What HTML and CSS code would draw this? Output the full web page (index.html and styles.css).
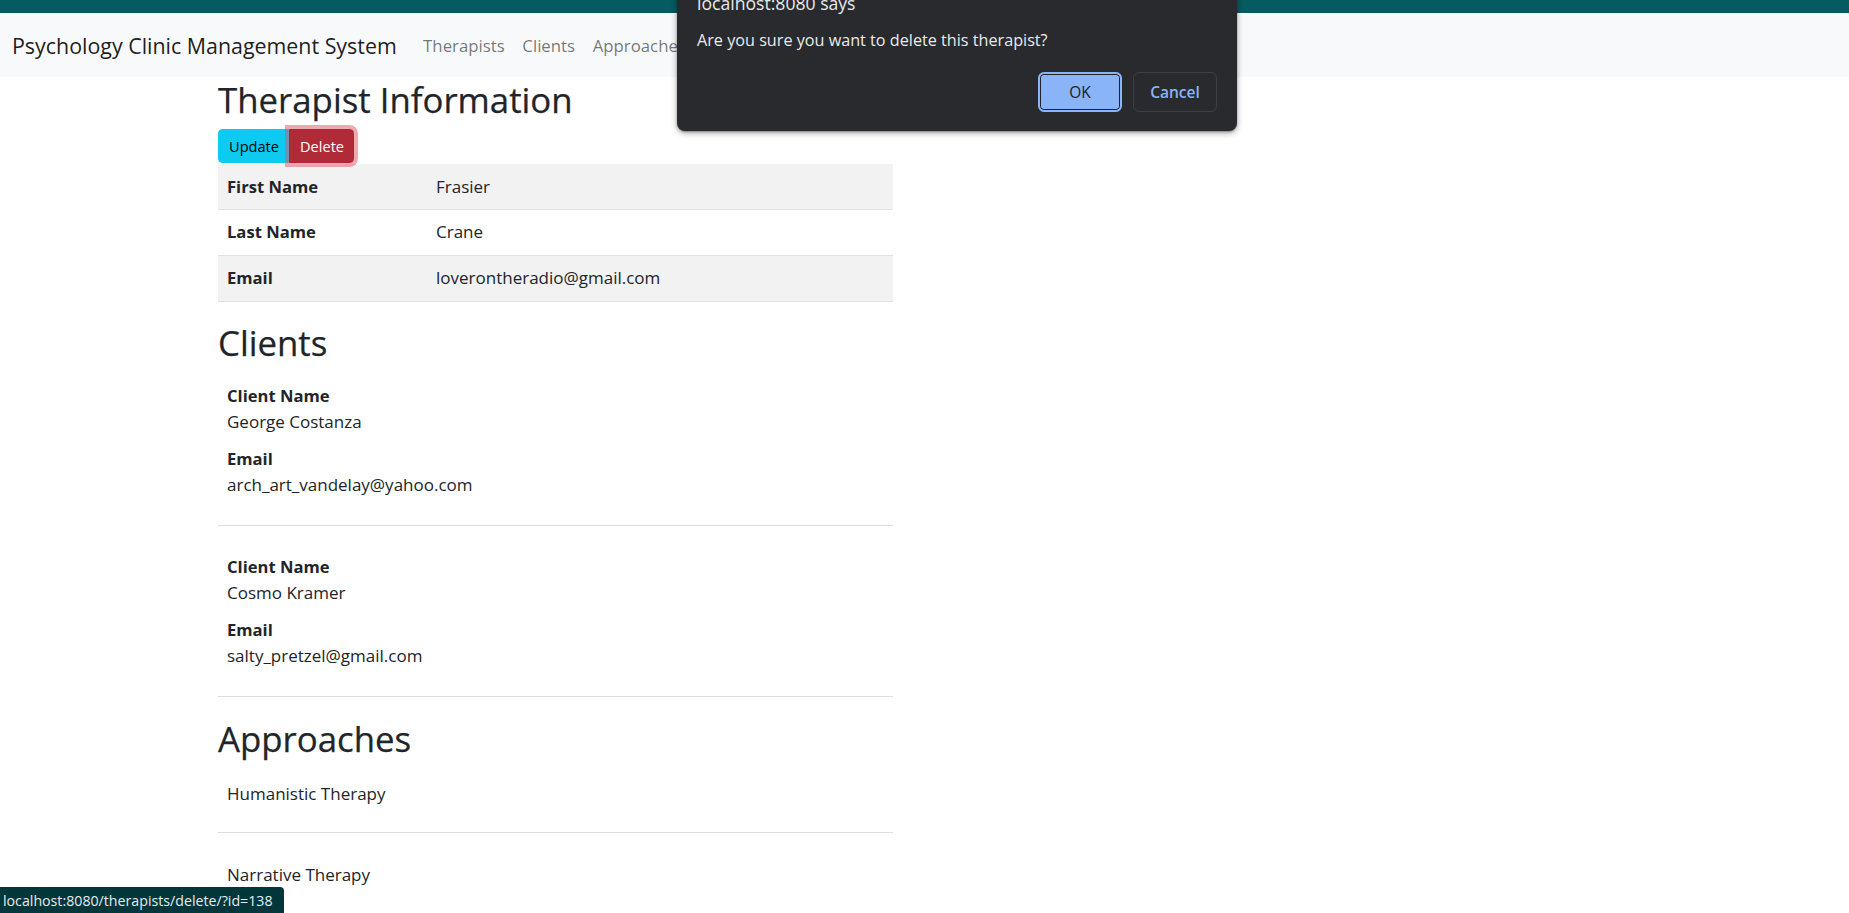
FILE: index.html
```html
<!DOCTYPE html>
<html lang="en">
<head>
<meta charset="utf-8">
<title>Therapist Information</title>
<link rel="stylesheet" href="styles.css">
</head>
<body>
<div class="topbar"></div>
<nav class="navbar">
  <a class="brand" href="#">Psychology Clinic Management System</a>
  <ul class="nav">
    <li><a class="nav-link" href="#">Therapists</a></li>
    <li><a class="nav-link" href="#">Clients</a></li>
    <li><a class="nav-link" href="#">Approaches</a></li>
  </ul>
</nav>

<main class="main">
  <h1 class="heading heading-main">Therapist Information</h1>
  <div class="btn-group">
    <button class="btn btn-info">Update</button>
    <button class="btn btn-danger">Delete</button>
  </div>
  <table class="info-table">
    <tbody>
      <tr class="striped"><th>First Name</th><td>Frasier</td></tr>
      <tr><th>Last Name</th><td>Crane</td></tr>
      <tr class="striped"><th>Email</th><td>loverontheradio@gmail.com</td></tr>
    </tbody>
  </table>

  <h2 class="heading heading-section">Clients</h2>
  <div class="item">
    <dl class="fields">
      <dt>Client Name</dt><dd>George Costanza</dd>
      <dt>Email</dt><dd>arch_art_vandelay@yahoo.com</dd>
    </dl>
  </div>
  <hr class="divider">
  <div class="item">
    <dl class="fields">
      <dt>Client Name</dt><dd>Cosmo Kramer</dd>
      <dt>Email</dt><dd>salty_pretzel@gmail.com</dd>
    </dl>
  </div>
  <hr class="divider">

  <h2 class="heading heading-section">Approaches</h2>
  <div class="item approach"><p class="line">Humanistic Therapy</p></div>
  <hr class="divider">
  <div class="item approach"><p class="line">Narrative Therapy</p></div>
</main>

<div class="dialog" role="dialog">
  <div class="dialog-title">localhost:8080 says</div>
  <div class="dialog-msg">Are you sure you want to delete this therapist?</div>
  <div class="dialog-actions">
    <button class="dbtn dbtn-ok">OK</button>
    <button class="dbtn dbtn-cancel">Cancel</button>
  </div>
</div>

<div class="statusbar">localhost:8080/therapists/delete/?id=138</div>
</body>
</html>
```

FILE: styles.css
```css
* { box-sizing: border-box; }

html, body {
  margin: 0;
  padding: 0;
  background: #ffffff;
  overflow: hidden;
}

body {
  font-family: "Open Sans", "Noto Sans", "Liberation Sans", sans-serif;
  font-size: 17px;
  line-height: 26.4px;
  color: #212529;
  height: 913px;
  position: relative;
}

.topbar {
  height: 13px;
  background: #065b61;
}

.navbar {
  height: 64px;
  background: #f8f9fa;
  display: flex;
  align-items: center;
  padding: 0 12px;
}

.brand {
  font-size: 21.4px;
  line-height: 32px;
  color: rgba(0, 0, 0, 0.9);
  text-decoration: none;
  margin-right: 17.6px;
  padding-top: 1px;
}

.nav {
  list-style: none;
  margin: 0;
  padding: 0;
  display: flex;
}

.nav-link {
  display: block;
  font-size: 16.8px;
  line-height: 26px;
  padding: 2px 8.8px 0;
  color: rgba(0, 0, 0, 0.55);
  text-decoration: none;
}

.main {
  margin-left: 218px;
  width: 675px;
  padding-top: 1px;
}

.heading {
  font-size: 34.8px;
  line-height: 42.2px;
  font-weight: 500;
  margin: 0 0 8.8px;
  color: #212529;
  -webkit-text-stroke: 0.25px #212529;
}

.heading-main {
  margin-top: 1px;
  margin-bottom: 7.8px;
}

.heading-section {
  padding-top: 2.5px;
}

.btn-group {
  display: flex;
  height: 34px;
}

.btn {
  font-family: inherit;
  font-size: 14.6px;
  line-height: 22px;
  height: 34px;
  padding: 0 10px;
  border: 1px solid transparent;
  cursor: pointer;
}

.btn-info {
  background: #0dcaf0;
  border-color: #0dcaf0;
  color: #000;
  border-radius: 4.4px 0 0 4.4px;
  width: 71px;
}

.btn-danger {
  background: #b02a37;
  border-color: #a52834;
  color: #fff;
  border-radius: 0 4.4px 4.4px 0;
  width: 65px;
  position: relative;
  z-index: 1;
  box-shadow: 0 0 0 4px rgba(225, 83, 97, 0.5);
}

.info-table {
  width: 675px;
  border-collapse: collapse;
  margin: 1px 0 17.6px;
}

.info-table th,
.info-table td {
  text-align: left;
  padding: 9.5px 9px 9px;
  line-height: 26.4px;
  border-bottom: 1px solid #dee2e6;
  vertical-align: top;
}

.info-table th {
  width: 209px;
  font-weight: 700;
  font-size: 16.6px;
}

.info-table tr.striped th,
.info-table tr.striped td {
  background: #f2f2f2;
}

.item {
  padding: 10px 9px 9.3px;
}

.item.approach {
  padding: 12px 9px 7.2px;
}

.fields {
  margin: 0;
}

.fields dt {
  font-weight: 700;
  font-size: 16.6px;
}

.fields dd {
  margin: 0 0 10px;
}

.fields dd:last-child {
  margin-bottom: 0;
}

.line {
  margin: 0;
}

.divider {
  margin: 17.6px 0;
  border: 0;
  border-top: 1px solid #dcdde0;
  height: 0;
}

/* Browser confirm dialog, drawn over the page */
.dialog {
  position: absolute;
  left: 677px;
  top: -7px;
  width: 560px;
  height: 138px;
  background: #292a2d;
  border-radius: 0 0 8px 8px;
  box-shadow: 0 2px 6px rgba(0, 0, 0, 0.35), 0 1px 2px rgba(0, 0, 0, 0.3);
  padding: 0 20px 19px;
  color: #e8eaed;
  display: flex;
  flex-direction: column;
}

.dialog-title {
  font-size: 17.6px;
  line-height: 20px;
}

.dialog-msg {
  font-size: 16.2px;
  line-height: 20px;
  margin-top: 16.7px;
}

.dialog-actions {
  margin-top: auto;
  display: flex;
  justify-content: flex-end;
  gap: 11px;
}

.dbtn {
  font-family: inherit;
  width: 84px;
  height: 40px;
  border-radius: 6px;
  font-size: 15.5px;
  cursor: pointer;
}

.dbtn-ok {
  background: #8ab4f8;
  color: #202124;
  border: 2px solid #8ab4f8;
  box-shadow: inset 0 0 0 1px #202124;
  font-weight: 500;
}

.dbtn-cancel {
  background: transparent;
  color: #8ab4f8;
  border: 1px solid #3c4043;
  font-weight: 600;
}

.statusbar {
  position: absolute;
  left: 0;
  bottom: 0;
  width: 284px;
  height: 26px;
  background: #01373b;
  color: #e8eaed;
  font-size: 14.2px;
  line-height: 26px;
  padding: 1px 0 0 3px;
  border-top-right-radius: 4px;
  white-space: nowrap;
}
```
